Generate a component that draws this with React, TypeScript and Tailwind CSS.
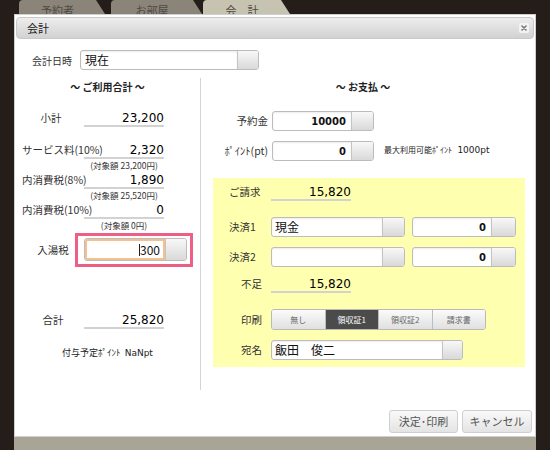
import type { ReactNode } from 'react'
import clsx from 'clsx'

const Field = ({
  w,
  btn,
  h = 'h-[20px]',
  right,
  children,
}: {
  w: string
  btn: string
  h?: string
  right?: boolean
  children?: ReactNode
}) => (
  <div className={clsx('flex shrink-0 overflow-hidden rounded-[3px] border border-[#bcbcbc] bg-white', w, h)}>
    <div
      className={clsx(
        'flex min-w-0 flex-1 items-center whitespace-nowrap shadow-[inset_0_1px_2px_rgba(0,0,0,0.08)]',
        right ? 'justify-end pr-[5px]' : 'pl-[3px]'
      )}
    >
      {children}
    </div>
    <div className={clsx('border-l border-[#c4c4c4] bg-linear-to-b from-[#f8f8f8] to-[#d9d9d9]', btn)} />
  </div>
)

const Num = ({ children }: { children: ReactNode }) => (
  <span className="font-['DejaVu_Sans',sans-serif] text-[10px] font-bold text-[#111]">{children}</span>
)

const Amount = ({ children }: { children: ReactNode }) => (
  <div className="w-[80px] shrink-0 border-b-2 border-[#d2d2d2] text-right font-['DejaVu_Sans',sans-serif] text-[12px] leading-[13px] text-black">
    {children}
  </div>
)

const SumRow = ({ label, value, sub }: { label: string; value: string; sub?: string }) => (
  <div className="h-[30px]">
    <div className="flex items-baseline">
      <div className="w-[62px] shrink-0 whitespace-nowrap text-center text-[10.5px] leading-[13px] text-[#333]">{label}</div>
      <Amount>{value}</Amount>
    </div>
    {sub && (
      <div className="ml-[62px] mt-[2px] w-[80px] whitespace-nowrap text-center text-[8.5px] leading-[8px] text-[#333]">{sub}</div>
    )}
  </div>
)

const tabs = [
  { label: '予約者', cls: 'ml-[19px] w-[86px] bg-[#8b8478]' },
  { label: 'お部屋', cls: 'ml-[6px] w-[91px] bg-[#8b8478]' },
  { label: '会　計', cls: 'ml-px w-[87px] bg-[#c6c3b0]' },
]

const printOpts = ['無し', '領収証1', '領収証2', '請求書']

export default function App() {
  return (
    <div className="h-[450px] w-[550px] overflow-hidden bg-[#241d19] font-['Noto_Sans_CJK_JP',sans-serif] text-[#333]">
      {/* tabs behind the dialog */}
      <div className="flex h-[14px]">
        {tabs.map((t) => (
          <div
            key={t.label}
            className={clsx(
              'h-[14px] overflow-hidden rounded-tl-[4px] [clip-path:polygon(0_0,calc(100%_-_9px)_0,100%_100%,0_100%)]',
              t.cls
            )}
          >
            <div className="mt-[4px] pr-[9px] text-center text-[11px] leading-[12px] text-[#4e4944]">{t.label}</div>
          </div>
        ))}
      </div>

      <div className="ml-[14px] w-[522px]">
        <div className="flex h-[423px] flex-col border border-[#cfcfcf] bg-white pt-[2px]">
          {/* title bar */}
          <div className="mx-px flex h-[22px] items-center justify-between rounded-[4px] border border-[#c9c9c9] bg-linear-to-b from-[#ededed] to-[#d2d2d2] pl-[10px] pr-[4px]">
            <span className="text-[11px] text-[#222]">会計</span>
            <span className="flex h-[10px] w-[10px] items-center justify-center rounded-[2px] bg-[#f3f3f3]">
              <svg width="6" height="6" viewBox="0 0 6 6">
                <path d="M1 1L5 5M5 1L1 5" stroke="#777" strokeWidth="1.6" strokeLinecap="round" />
              </svg>
            </span>
          </div>

          {/* 会計日時 */}
          <div className="mt-[11px] flex items-center pl-[17px]">
            <div className="w-[48px] text-[10px] text-[#333]">会計日時</div>
            <Field w="w-[179px]" btn="w-[21px]">
              <span className="pl-px text-[12px] text-[#111]">現在</span>
            </Field>
          </div>

          {/* columns */}
          <div className="mt-[8px] flex h-[312px]">
            {/* left */}
            <div className="w-[186px] shrink-0 border-r border-[#d4d4d4] pl-[7px]">
              <div className="h-[17px] pr-[7px] text-center text-[10px] font-bold leading-[17px] text-[#222]">～&nbsp;ご利用合計&nbsp;～</div>
              <div className="mt-[16px] h-[32px]">
                <div className="flex items-baseline">
                  <div className="w-[62px] shrink-0 pr-[4px] text-center text-[10.5px] leading-[13px] text-[#333]">小計</div>
                  <Amount>23,200</Amount>
                </div>
              </div>
              <SumRow label="サービス料(10%)" value="2,320" sub="(対象額 23,200円)" />
              <SumRow label="内消費税(8%)" value="1,890" sub="(対象額 25,520円)" />
              <SumRow label="内消費税(10%)" value="0" sub="(対象額 0円)" />

              <div className="mt-[5px] flex items-center">
                <div className="w-[62px] shrink-0 text-center text-[10.5px] text-[#333]">入湯税</div>
                <div className="relative">
                  <div className="flex h-[23px] w-[103px] overflow-hidden rounded-[3px] border border-[#bcbcbc] bg-white">
                    <div className="flex flex-1 items-center justify-end border-2 border-[#f6c08e] pr-[3px]">
                      <span className="h-[12px] w-px bg-[#222]" />
                      <span className="text-[12px] leading-[14px] text-[#111]">300</span>
                    </div>
                    <div className="w-[21px] border-l border-[#c4c4c4] bg-linear-to-b from-[#f8f8f8] to-[#d9d9d9]" />
                  </div>
                  <div className="pointer-events-none absolute -bottom-[6px] -left-[9px] -right-[6px] -top-[5px] border-[3px] border-[#ee5f85]" />
                </div>
              </div>

              <div className="mt-[52px] flex items-baseline">
                <div className="w-[62px] shrink-0 text-center text-[10.5px] leading-[13px] text-[#333]">合計</div>
                <Amount>25,820</Amount>
              </div>
              <div className="mt-[18px] pr-[7px] text-center text-[9px] leading-[12px] text-[#222]">
                付与予定ﾎﾟｲﾝﾄ&nbsp;&nbsp;<span className="font-['DejaVu_Sans',sans-serif] text-[9px]">NaNpt</span>
              </div>
            </div>

            {/* right */}
            <div className="flex-1">
              <div className="h-[17px] pr-[10px] text-center text-[10px] font-bold leading-[17px] text-[#222]">～&nbsp;お支払&nbsp;～</div>

              <div className="mt-[16px] flex items-center">
                <div className="w-[67px] shrink-0 text-right text-[10.5px] text-[#333]">予約金</div>
                <div className="ml-[4px]">
                  <Field w="w-[102px]" btn="w-[22px]" right>
                    <Num>10000</Num>
                  </Field>
                </div>
              </div>
              <div className="mt-[10px] flex items-center">
                <div className="w-[67px] shrink-0 whitespace-nowrap text-right text-[10.5px] text-[#333]">ﾎﾟｲﾝﾄ(pt)</div>
                <div className="ml-[4px]">
                  <Field w="w-[102px]" btn="w-[22px]" right>
                    <Num>0</Num>
                  </Field>
                </div>
                <div className="ml-[10px] whitespace-nowrap text-[8px] text-[#222]">
                  最大利用可能ﾎﾟｲﾝﾄ&nbsp;&nbsp;&nbsp;<span className="font-['DejaVu_Sans',sans-serif] text-[9px]">1000pt</span>
                </div>
              </div>

              {/* yellow payment box */}
              <div className="ml-[12px] mt-[17px] w-[312px] bg-[#ffffb0] pb-[7px] pl-[16px] pt-[7px]">
                <div className="flex items-baseline">
                  <div className="w-[42px] shrink-0 text-[10.5px] leading-[13px] text-[#333]">ご請求</div>
                  <Amount>15,820</Amount>
                </div>

                <div className="mt-[16px] flex items-center">
                  <div className="w-[42px] shrink-0 text-[10.5px] text-[#333]">決済1</div>
                  <Field w="w-[134px]" btn="w-[22px]">
                    <span className="text-[12px] text-[#111]">現金</span>
                  </Field>
                  <div className="ml-[7px]">
                    <Field w="w-[104px]" btn="w-[24px]" right>
                      <Num>0</Num>
                    </Field>
                  </div>
                </div>
                <div className="mt-[10px] flex items-center">
                  <div className="w-[42px] shrink-0 text-[10.5px] text-[#333]">決済2</div>
                  <Field w="w-[134px]" btn="w-[22px]" />
                  <div className="ml-[7px]">
                    <Field w="w-[104px]" btn="w-[24px]" right>
                      <Num>0</Num>
                    </Field>
                  </div>
                </div>

                <div className="mt-[10px] flex items-baseline">
                  <div className="w-[42px] shrink-0 pr-[9px] text-right text-[10.5px] leading-[13px] text-[#333]">不足</div>
                  <Amount>15,820</Amount>
                </div>

                <div className="mt-[16px] flex items-center">
                  <div className="w-[42px] shrink-0 pr-[9px] text-right text-[10.5px] text-[#333]">印刷</div>
                  <div className="flex h-[21px] w-[215px] overflow-hidden rounded-[3px] border border-[#b9b9b9]">
                    {printOpts.map((o, i) => (
                      <div
                        key={o}
                        className={clsx(
                          'flex flex-1 items-center justify-center text-[8px]',
                          i > 0 && 'border-l border-[#bdbdbd]',
                          i === 1
                            ? 'bg-[#4b4b4b] text-white'
                            : 'bg-linear-to-b from-[#fbfbfb] to-[#e0e0e0] text-[#666]'
                        )}
                      >
                        {o}
                      </div>
                    ))}
                  </div>
                </div>

                <div className="mt-[10px] flex items-center">
                  <div className="w-[42px] shrink-0 pr-[9px] text-right text-[10.5px] text-[#333]">宛名</div>
                  <Field w="w-[192px]" btn="w-[20px]">
                    <span className="text-[12px] text-[#111]">飯田　俊二</span>
                  </Field>
                </div>
              </div>
            </div>
          </div>

          {/* footer */}
          <div className="mt-auto flex justify-end gap-[4px] pb-[3px] pr-[3px]">
            <button className="h-[23px] w-[69px] rounded-[3px] border border-[#cfcfcf] bg-linear-to-b from-[#f9f9f9] to-[#e4e4e4] text-[11px] text-[#555]">
              決定･印刷
            </button>
            <button className="h-[23px] w-[70px] rounded-[3px] border border-[#cfcfcf] bg-linear-to-b from-[#f9f9f9] to-[#e4e4e4] text-[11px] text-[#555]">
              キャンセル
            </button>
          </div>
        </div>
        <div className="h-[13px] bg-[#a8a597]" />
      </div>
    </div>
  )
}
